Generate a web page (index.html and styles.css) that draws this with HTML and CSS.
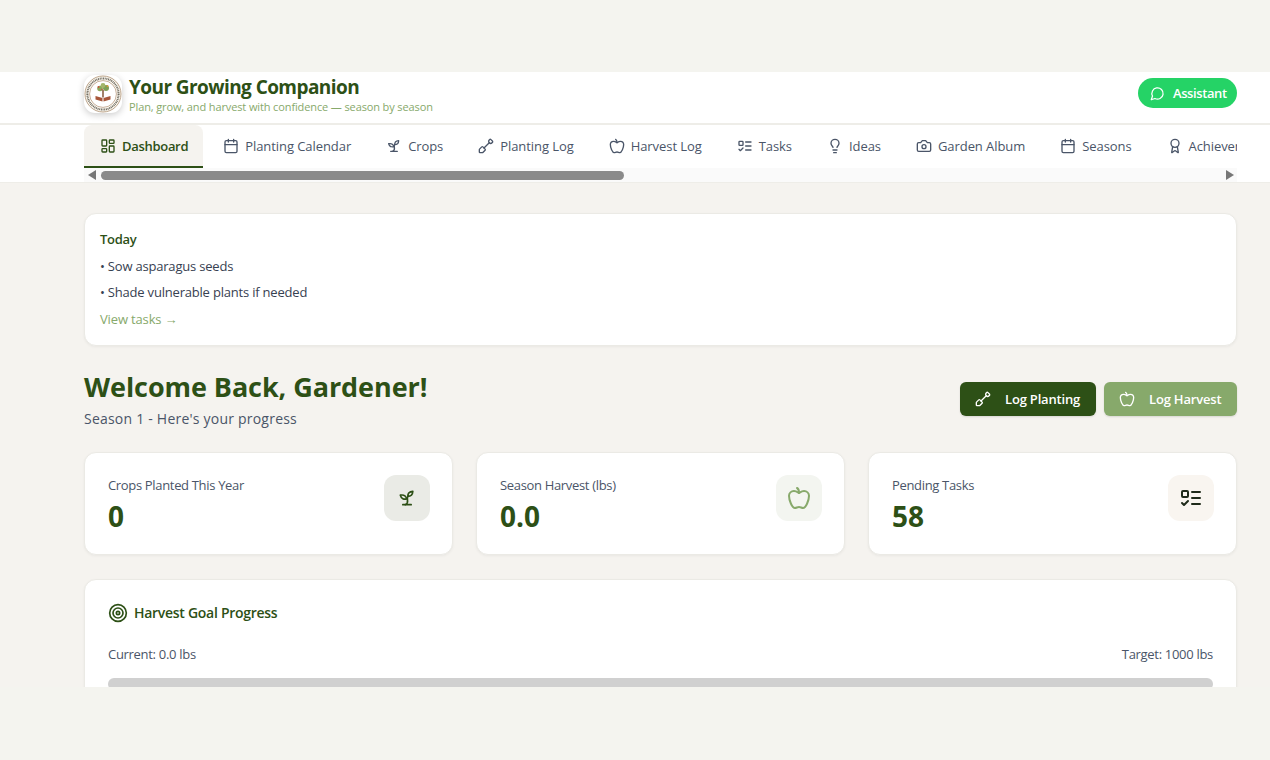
FILE: index.html
```html
<!DOCTYPE html>
<html lang="en">
<head>
<meta charset="utf-8">
<title>Your Growing Companion</title>
<link rel="stylesheet" href="styles.css">
</head>
<body>
<svg class="sprite" width="0" height="0" aria-hidden="true">
  <symbol id="i-dash" viewBox="0 0 24 24"><rect x="3" y="3" width="7" height="9" rx="1"/><rect x="14" y="3" width="7" height="5" rx="1"/><rect x="14" y="12" width="7" height="9" rx="1"/><rect x="3" y="16" width="7" height="5" rx="1"/></symbol>
  <symbol id="i-cal" viewBox="0 0 24 24"><path d="M8 2v4M16 2v4M3 10h18"/><rect x="3" y="4" width="18" height="18" rx="2"/></symbol>
  <symbol id="i-sprout" viewBox="0 0 24 24"><path d="M7 20h10"/><path d="M10 20c5.5-2.5.8-6.4 3-10"/><path d="M9.5 9.4c1.1.8 1.8 2.2 2.3 3.7-2 .4-3.5.4-4.8-.3-1.2-.6-2.3-1.9-3-4.2 2.8-.5 4.4 0 5.5.8z"/><path d="M14.1 6a7 7 0 0 0-1.1 4c1.9-.1 3.3-.6 4.3-1.4 1-1 1.6-2.3 1.7-4.6-2.7.1-4 1-4.9 2z"/></symbol>
  <symbol id="i-shovel" viewBox="0 0 24 24"><path d="M21.56 4.56a1.5 1.5 0 0 1 0 2.122l-.47.47a3 3 0 0 1-4.212-.03 3 3 0 0 1 0-4.243l.44-.44a1.5 1.5 0 0 1 2.121 0z"/><path d="M3 22a1 1 0 0 1-1-1v-3.586a1 1 0 0 1 .293-.707l3.355-3.355a1.205 1.205 0 0 1 1.704 0l3.296 3.296a1.205 1.205 0 0 1 0 1.704l-3.355 3.355a1 1 0 0 1-.707.293z"/><path d="m9 15 7.879-7.878"/></symbol>
  <symbol id="i-apple" viewBox="0 0 24 24"><path d="M12 20.94c1.5 0 2.75 1.06 4 1.06 3 0 6-8 6-12.22A4.91 4.91 0 0 0 17 5c-2.22 0-4 1.44-5 2-1-.56-2.78-2-5-2a4.9 4.9 0 0 0-5 4.78C2 14 5 22 8 22c1.25 0 2.5-1.06 4-1.06Z"/><path d="M10 2c1 .5 2 2 2 5"/></symbol>
  <symbol id="i-todo" viewBox="0 0 24 24"><rect x="3" y="5" width="6" height="6" rx="1"/><path d="m3 17 2 2 4-4M13 6h8M13 12h8M13 18h8"/></symbol>
  <symbol id="i-bulb" viewBox="0 0 24 24"><path d="M15 14c.2-1 .7-1.7 1.5-2.5 1-.9 1.5-2.2 1.5-3.5A6 6 0 0 0 6 8c0 1 .2 2.2 1.5 3.5.7.7 1.3 1.5 1.5 2.5"/><path d="M9 18h6M10 22h4"/></symbol>
  <symbol id="i-camera" viewBox="0 0 24 24"><path d="M14.5 4h-5L7 7H4a2 2 0 0 0-2 2v9a2 2 0 0 0 2 2h16a2 2 0 0 0 2-2V9a2 2 0 0 0-2-2h-3l-2.5-3z"/><circle cx="12" cy="13" r="3"/></symbol>
  <symbol id="i-award" viewBox="0 0 24 24"><path d="m15.477 12.89 1.515 8.526a.5.5 0 0 1-.81.47l-3.58-2.687a1 1 0 0 0-1.197 0l-3.586 2.686a.5.5 0 0 1-.81-.469l1.514-8.526"/><circle cx="12" cy="8" r="6"/></symbol>
  <symbol id="i-msg" viewBox="0 0 24 24"><path d="M7.9 20A9 9 0 1 0 4 16.1L2 22Z"/></symbol>
  <symbol id="i-target" viewBox="0 0 24 24"><circle cx="12" cy="12" r="10"/><circle cx="12" cy="12" r="6"/><circle cx="12" cy="12" r="2"/></symbol>
</svg>

<div class="app">
  <header class="topbar">
    <div class="brand">
      <div class="logo">
        <svg viewBox="0 0 38 38" width="38" height="38" aria-hidden="true">
          <circle cx="19" cy="19" r="18" fill="#fbf8f1" stroke="#b39a7e" stroke-width=".9"/>
          <circle cx="19" cy="19" r="13.4" fill="#fff" stroke="#b08f73" stroke-width=".7"/>
          <circle cx="19" cy="19" r="15.6" fill="none" stroke="#6f6a5e" stroke-width="2" stroke-dasharray="1 .7"/>
          <circle cx="16" cy="13.5" r="2.8" fill="#8aa85c"/>
          <circle cx="22" cy="13" r="3" fill="#7f9f55"/>
          <circle cx="19" cy="10.5" r="2.4" fill="#a3b56a"/>
          <circle cx="14.5" cy="12" r=".9" fill="#c9503c"/>
          <circle cx="23.5" cy="11" r=".9" fill="#d9973a"/>
          <circle cx="18" cy="14.5" r=".8" fill="#c9503c"/>
          <path d="M18.3 15h1.4v7.5h-1.4z" fill="#7a4b2a"/>
          <path d="M11.5 21l7 2v3.6l-7-2zM26.5 21l-7 2v3.6l7-2z" fill="#a8573a"/>
        </svg>
      </div>
      <div class="brand-text">
        <div class="brand-title">Your Growing Companion</div>
        <div class="brand-sub">Plan, grow, and harvest with confidence — season by season</div>
      </div>
    </div>
    <button class="assistant"><svg class="ico ico-15"><use href="#i-msg"/></svg>Assistant</button>
  </header>

  <nav class="nav">
    <div class="tabs">
      <a class="tab active"><svg class="ico"><use href="#i-dash"/></svg>Dashboard</a>
      <a class="tab"><svg class="ico"><use href="#i-cal"/></svg>Planting Calendar</a>
      <a class="tab"><svg class="ico"><use href="#i-sprout"/></svg>Crops</a>
      <a class="tab"><svg class="ico"><use href="#i-shovel"/></svg>Planting Log</a>
      <a class="tab"><svg class="ico"><use href="#i-apple"/></svg>Harvest Log</a>
      <a class="tab"><svg class="ico"><use href="#i-todo"/></svg>Tasks</a>
      <a class="tab"><svg class="ico"><use href="#i-bulb"/></svg>Ideas</a>
      <a class="tab"><svg class="ico"><use href="#i-camera"/></svg>Garden Album</a>
      <a class="tab"><svg class="ico"><use href="#i-cal"/></svg>Seasons</a>
      <a class="tab"><svg class="ico"><use href="#i-award"/></svg>Achievements</a>
    </div>
    <div class="scrollbar" aria-hidden="true">
      <span class="arrow arrow-left"></span>
      <span class="thumb"></span>
      <span class="arrow arrow-right"></span>
    </div>
  </nav>

  <main class="main">
    <section class="card today">
      <div class="today-title">Today</div>
      <div class="today-item">• Sow asparagus seeds</div>
      <div class="today-item">• Shade vulnerable plants if needed</div>
      <a class="today-link">View tasks →</a>
    </section>

    <section class="welcome">
      <div>
        <h1 class="welcome-title">Welcome Back, Gardener!</h1>
        <p class="welcome-sub">Season 1 - Here's your progress</p>
      </div>
      <div class="actions">
        <button class="btn btn-dark"><svg class="ico"><use href="#i-shovel"/></svg>Log Planting</button>
        <button class="btn btn-light"><svg class="ico"><use href="#i-apple"/></svg>Log Harvest</button>
      </div>
    </section>

    <section class="stats">
      <div class="card stat">
        <div>
          <div class="stat-label">Crops Planted This Year</div>
          <div class="stat-value">0</div>
        </div>
        <div class="stat-icon tint-green"><svg class="ico ico-20"><use href="#i-sprout"/></svg></div>
      </div>
      <div class="card stat">
        <div>
          <div class="stat-label">Season Harvest (lbs)</div>
          <div class="stat-value">0.0</div>
        </div>
        <div class="stat-icon tint-sage"><svg class="ico ico-24"><use href="#i-apple"/></svg></div>
      </div>
      <div class="card stat">
        <div>
          <div class="stat-label">Pending Tasks</div>
          <div class="stat-value">58</div>
        </div>
        <div class="stat-icon tint-warm"><svg class="ico ico-24"><use href="#i-todo"/></svg></div>
      </div>
    </section>

    <section class="card goal">
      <div class="goal-title"><svg class="ico ico-20"><use href="#i-target"/></svg>Harvest Goal Progress</div>
      <div class="goal-row"><span>Current: 0.0 lbs</span><span>Target: 1000 lbs</span></div>
      <div class="goal-bar"></div>
    </section>
  </main>
</div>
</body>
</html>
```
FILE: styles.css
```css
* { box-sizing: border-box; }
html, body { margin: 0; padding: 0; }
body {
  background: #f4f4ef;
  font-family: "Open Sans", "Noto Sans", sans-serif;
  color: #374151;
  padding-top: 72px;
  height: 760px;
  overflow: hidden;
}
.sprite { position: absolute; }
.ico {
  width: 16px; height: 16px; flex: none;
  fill: none; stroke: currentColor; stroke-width: 2;
  stroke-linecap: round; stroke-linejoin: round;
}
.ico-15 { width: 15px; height: 15px; }
.ico-20 { width: 20px; height: 20px; }
.ico-24 { width: 24px; height: 24px; }

.app { height: 615px; overflow: hidden; background: #f5f3ef; }

.topbar {
  height: 53px; background: #fff; border-bottom: 2px solid #eeede8;
  padding: 3px 33px 0 84px;
  display: flex; align-items: flex-start; justify-content: space-between;
}
.brand { display: flex; align-items: flex-start; gap: 7px; }
.logo {
  width: 38px; height: 38px; border-radius: 11px; background: #fff;
  box-shadow: 0 2px 7px rgba(0,0,0,.2); flex: none;
}
.logo svg { display: block; }
.brand-title { font-size: 19px; line-height: 24px; font-weight: 700; color: #2d5016; letter-spacing: -.57px; }
.brand-sub { font-size: 11px; line-height: 16px; color: #87a96b; letter-spacing: -.12px; }
.assistant {
  display: flex; align-items: center; gap: 8px; height: 30px; width: 99px;
  padding: 0 0 0 12px; border: 0; border-radius: 15px; background: #25d366;
  color: #fff; font: 600 13px "Open Sans", sans-serif; letter-spacing: -.4px;
  margin-top: 3px;
}

.nav { background: #fff; border-bottom: 1px solid #eeede8; padding: 0 33px 0 84px; height: 58px; }
.tabs { display: flex; gap: 4px; height: 43px; overflow: hidden; }
.tab {
  display: flex; align-items: center; gap: 6px; height: 43px; padding: 0 15px 0 16px; flex: none;
  font-size: 13px; font-weight: 500; color: #4a5568; white-space: nowrap;
  letter-spacing: -.07px;
  border-bottom: 2px solid transparent; border-radius: 8px 8px 0 0;
}
.tab.active { background: #f5f3ef; color: #2d5016; border-bottom-color: #2d5016; font-weight: 600; letter-spacing: -.3px; }

.scrollbar { display: flex; align-items: center; gap: 5px; height: 14px; padding: 0 3px 0 4px; background: #fafafa; }
.thumb { width: 523px; height: 9px; border-radius: 5px; background: #8a8a8a; margin-right: auto; }
.arrow { width: 0; height: 0; border-style: solid; border-color: transparent; border-width: 5px 0; }
.arrow-left { border-right: 8px solid #777; }
.arrow-right { border-left: 8px solid #777; }

.main { padding: 30px 33px 0 84px; }
.card { background: #fff; border: 1px solid #ebeae5; border-radius: 12px; box-shadow: 0 1px 3px rgba(0,0,0,.05); }
.today { height: 133px; padding: 12px 15px; font-size: 13px; line-height: 26.5px; }
.today-title { font-weight: 600; color: #2d5016; letter-spacing: -.3px; }
.today-item { letter-spacing: -.2px; color: #374151; }
.today-link { color: #87a96b; letter-spacing: -.15px; display: block; }

.welcome { display: flex; justify-content: space-between; align-items: center; margin-top: 22px; height: 62px; }
.welcome-title { margin: 0; font-size: 27px; line-height: 36px; font-weight: 700; color: #2d5016; letter-spacing: -.07px; }
.welcome-sub { margin: 4px 0 0; font-size: 14px; line-height: 20px; color: #4a5568; letter-spacing: .22px; }
.actions { display: flex; gap: 8px; }
.btn {
  display: flex; align-items: center; gap: 14px; height: 34px; padding: 0 15px;
  border: 0; border-radius: 6px; color: #fff; font: 600 13px "Open Sans", sans-serif; letter-spacing: -.18px;
  box-shadow: 0 1px 2px rgba(0,0,0,.12);
}
.btn-dark { background: #2d5016; width: 136px; }
.btn-light { background: #87a96b; width: 133px; }

.stats { display: grid; grid-template-columns: repeat(3, 1fr); gap: 23px; margin-top: 22px; }
.stat { height: 103px; padding: 22px 22px 22px 23px; display: flex; justify-content: space-between; align-items: flex-start; }
.stat-label { font-size: 13px; line-height: 20px; color: #4a5568; letter-spacing: -.33px; }
.stat-value { font-size: 28px; line-height: 38px; font-weight: 700; color: #2d5016; margin-top: 2px; }
.stat-icon { width: 46px; height: 46px; border-radius: 12px; display: flex; align-items: center; justify-content: center; }
.tint-green { background: #eaebe6; color: #2d5016; }
.tint-sage { background: #f3f5f0; color: #87a96b; }
.tint-warm { background: #f9f5f0; color: #1f2a1a; }

.goal { margin-top: 24px; height: 200px; padding: 23px 23px; }
.goal-title { display: flex; align-items: center; gap: 6px; font-size: 14px; line-height: 20px; font-weight: 600; color: #2d5016; letter-spacing: -.28px; }
.goal-row { display: flex; justify-content: space-between; margin-top: 21px; font-size: 13px; line-height: 20px; color: #4a5568; letter-spacing: -.3px; }
.goal-bar { height: 12px; margin-top: 14px; background: #d0d0d0; border-radius: 6px; }
```
